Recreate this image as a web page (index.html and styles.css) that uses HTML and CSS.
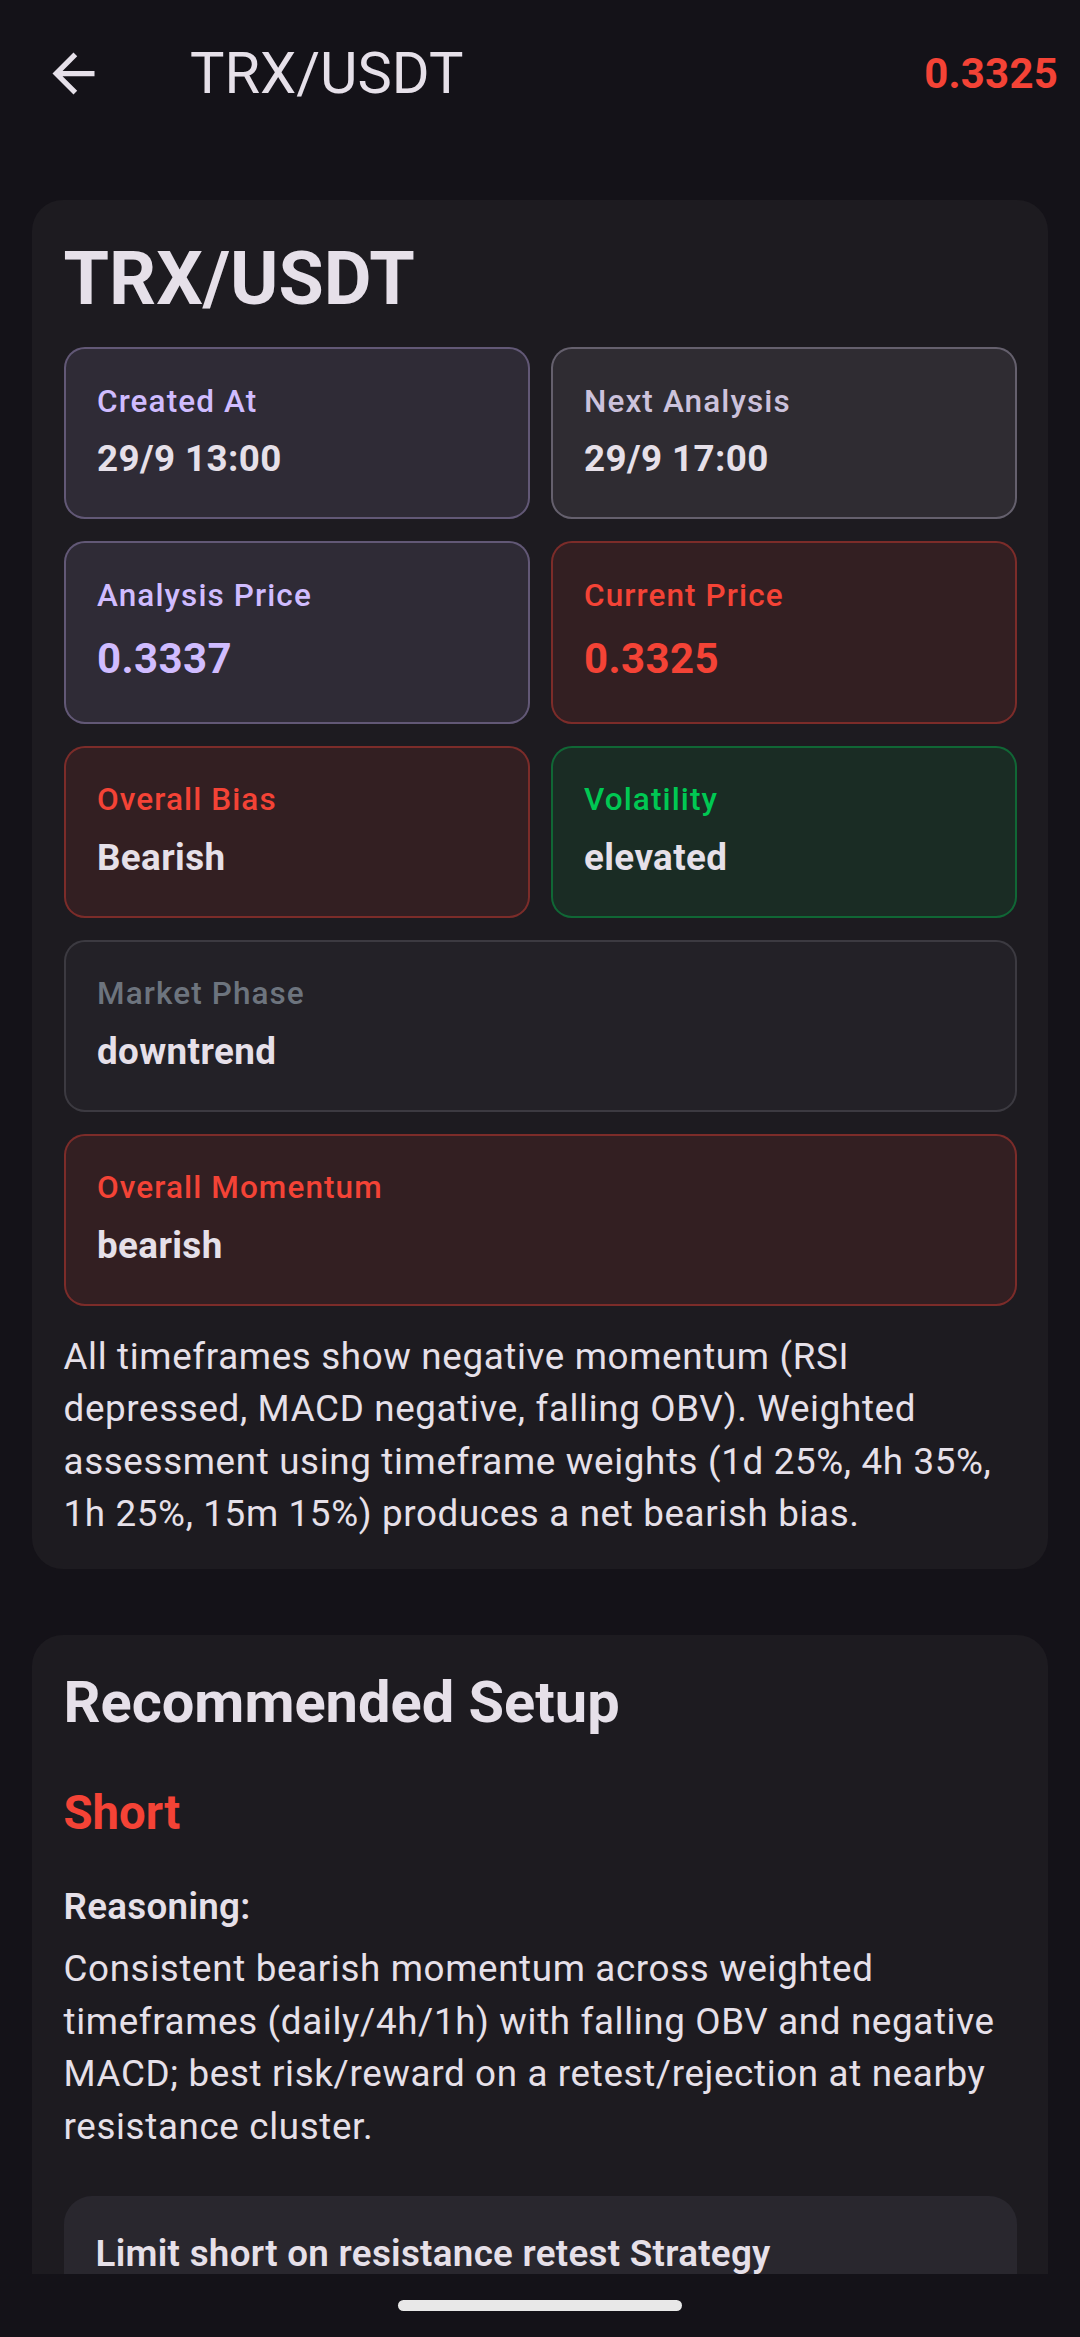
FILE: index.html
```html
<!DOCTYPE html>
<html>
<head>
	<meta charset="utf-8">
	<meta name="viewport" content="width=device-width, initial-scale=1">
	<title>TRX/USDT | Analysis</title>
	<link rel="stylesheet" href="styles.css">
</head>
<body>
<header class="appbar">
	<button class="back_btn" aria-label="Back">
		<svg viewBox="0 0 24 24" width="63" height="63"><path d="M20 11H7.83l5.59-5.59L12 4l-8 8 8 8 1.41-1.41L7.83 13H20v-2z"/></svg>
	</button>
	<div class="appbar_title">TRX/USDT</div>
	<div class="appbar_price">0.3325</div>
</header>

<main class="scroll">
	<section class="card card_summary">
		<h1 class="card_title">TRX/USDT</h1>
		<div class="tiles">
			<div class="tile tile_primary">
				<div class="tile_label">Created At</div>
				<div class="tile_value">29/9 13:00</div>
			</div>
			<div class="tile tile_secondary">
				<div class="tile_label">Next Analysis</div>
				<div class="tile_value">29/9 17:00</div>
			</div>
			<div class="tile tile_primary">
				<div class="tile_label">Analysis Price</div>
				<div class="tile_value big">0.3337</div>
			</div>
			<div class="tile tile_red">
				<div class="tile_label">Current Price</div>
				<div class="tile_value big">0.3325</div>
			</div>
			<div class="tile tile_red">
				<div class="tile_label">Overall Bias</div>
				<div class="tile_value">Bearish</div>
			</div>
			<div class="tile tile_green">
				<div class="tile_label">Volatility</div>
				<div class="tile_value">elevated</div>
			</div>
			<div class="tile tile_grey wide">
				<div class="tile_label">Market Phase</div>
				<div class="tile_value">downtrend</div>
			</div>
			<div class="tile tile_red wide">
				<div class="tile_label">Overall Momentum</div>
				<div class="tile_value">bearish</div>
			</div>
		</div>
		<p class="summary_text">All timeframes show negative momentum (RSI depressed, MACD negative, falling OBV). Weighted assessment using timeframe weights (1d 25%, 4h 35%, 1h 25%, 15m 15%) produces a net bearish bias.</p>
	</section>

	<section class="card card_setup">
		<h2 class="setup_title">Recommended Setup</h2>
		<div class="setup_side">Short</div>
		<div class="setup_label">Reasoning:</div>
		<p class="setup_text">Consistent bearish momentum across weighted timeframes (daily/4h/1h) with falling OBV and negative MACD; best risk/reward on a retest/rejection at nearby resistance cluster.</p>
		<div class="strategy">
			<div class="strategy_title">Limit short on resistance retest Strategy</div>
		</div>
	</section>
</main>

<nav class="sysnav">
	<div class="home_pill"></div>
</nav>
</body>
</html>
```

FILE: styles.css
```css
html, body{
	margin: 0;
	padding: 0;
}
body{
	background-color: #141218;
	color: #e6e0e9;
	font-family: Roboto, "Noto Sans", sans-serif;
	height: 2337px;
	overflow: hidden;
	display: flex;
	flex-direction: column;
}

/* top bar */
.appbar{
	height: 147px;
	flex: none;
	display: flex;
	align-items: center;
	padding: 0 22px 0 42px;
}
.back_btn{
	width: 63px;
	height: 63px;
	padding: 0;
	border: 0;
	background: none;
	display: flex;
}
.back_btn svg{
	fill: #e6e0e9;
}
.appbar_title{
	margin-left: 85px;
	font-size: 57.75px;
	line-height: 73.5px;
	flex: 1;
}
.appbar_price{
	color: #f44336;
	font-size: 42px;
	font-weight: 700;
	letter-spacing: 0.2px;
}

/* scrolling content */
.scroll{
	flex: 1;
	min-height: 0;
	overflow: hidden;
	padding: 53px 32px 0;
}
.card{
	background-color: #1d1b20;
	border-radius: 31px;
	padding: 31.5px;
}
.card_summary{
	padding-bottom: 28px;
}
.card_title{
	margin: 0 0 21px;
	font-size: 73.5px;
	line-height: 94.5px;
	font-weight: 700;
}

.tiles{
	display: grid;
	grid-template-columns: 1fr 1fr;
	gap: 22px 21px;
}
.tile{
	border: 2px solid;
	border-radius: 21px;
	padding: 31.5px;
}
.tile.wide{
	grid-column: span 2;
}
.tile_label{
	font-size: 31.5px;
	line-height: 42px;
	font-weight: 500;
	letter-spacing: 1.1px;
}
.tile_value{
	margin-top: 10.5px;
	font-size: 36.75px;
	line-height: 52.5px;
	font-weight: 700;
	letter-spacing: 0.4px;
}
.tile_value.big{
	font-size: 42px;
	line-height: 63px;
}

.tile_primary{
	background-color: rgba(208, 188, 255, 0.1);
	border-color: rgba(208, 188, 255, 0.32);
}
.tile_primary .tile_label, .tile_primary .big{
	color: #d0bcff;
}
.tile_secondary{
	background-color: rgba(204, 194, 220, 0.1);
	border-color: rgba(204, 194, 220, 0.35);
}
.tile_secondary .tile_label{
	color: #ccc2dc;
}
.tile_red{
	background-color: rgba(244, 67, 54, 0.1);
	border-color: rgba(244, 67, 54, 0.38);
}
.tile_red .tile_label, .tile_red .big{
	color: #f44336;
}
.tile_green{
	background-color: rgba(0, 200, 83, 0.1);
	border-color: rgba(0, 200, 83, 0.38);
}
.tile_green .tile_label{
	color: #00c853;
}
.tile_grey{
	background-color: rgba(158, 158, 170, 0.05);
	border-color: rgba(158, 158, 170, 0.2);
}
.tile_grey .tile_label{
	color: #6d747e;
}

.summary_text, .setup_text{
	margin: 25px 0 0;
	font-size: 36.75px;
	line-height: 52.5px;
	letter-spacing: 0.65px;
}

/* recommended setup */
.card_setup{
	margin-top: 66px;
}
.setup_title{
	margin: 0 0 42px;
	font-size: 57.75px;
	line-height: 73.5px;
	font-weight: 700;
}
.setup_side{
	color: #f44336;
	font-size: 47.25px;
	line-height: 63px;
	font-weight: 700;
}
.setup_label{
	margin-top: 36px;
	font-size: 36.75px;
	line-height: 52.5px;
	font-weight: 600;
	letter-spacing: 0.3px;
}
.setup_text{
	margin-top: 10px;
}
.strategy{
	margin-top: 43px;
	background-color: #29272e;
	border-radius: 28px;
	padding: 32px;
	min-height: 300px;
}
.strategy_title{
	font-size: 36.75px;
	line-height: 52.5px;
	font-weight: 600;
	letter-spacing: 0.3px;
}

/* system navigation */
.sysnav{
	height: 63px;
	flex: none;
	display: flex;
	justify-content: center;
	align-items: center;
	background-color: #141218;
}
.home_pill{
	width: 284px;
	height: 11px;
	border-radius: 6px;
	background-color: #e8e8e8;
}
```
